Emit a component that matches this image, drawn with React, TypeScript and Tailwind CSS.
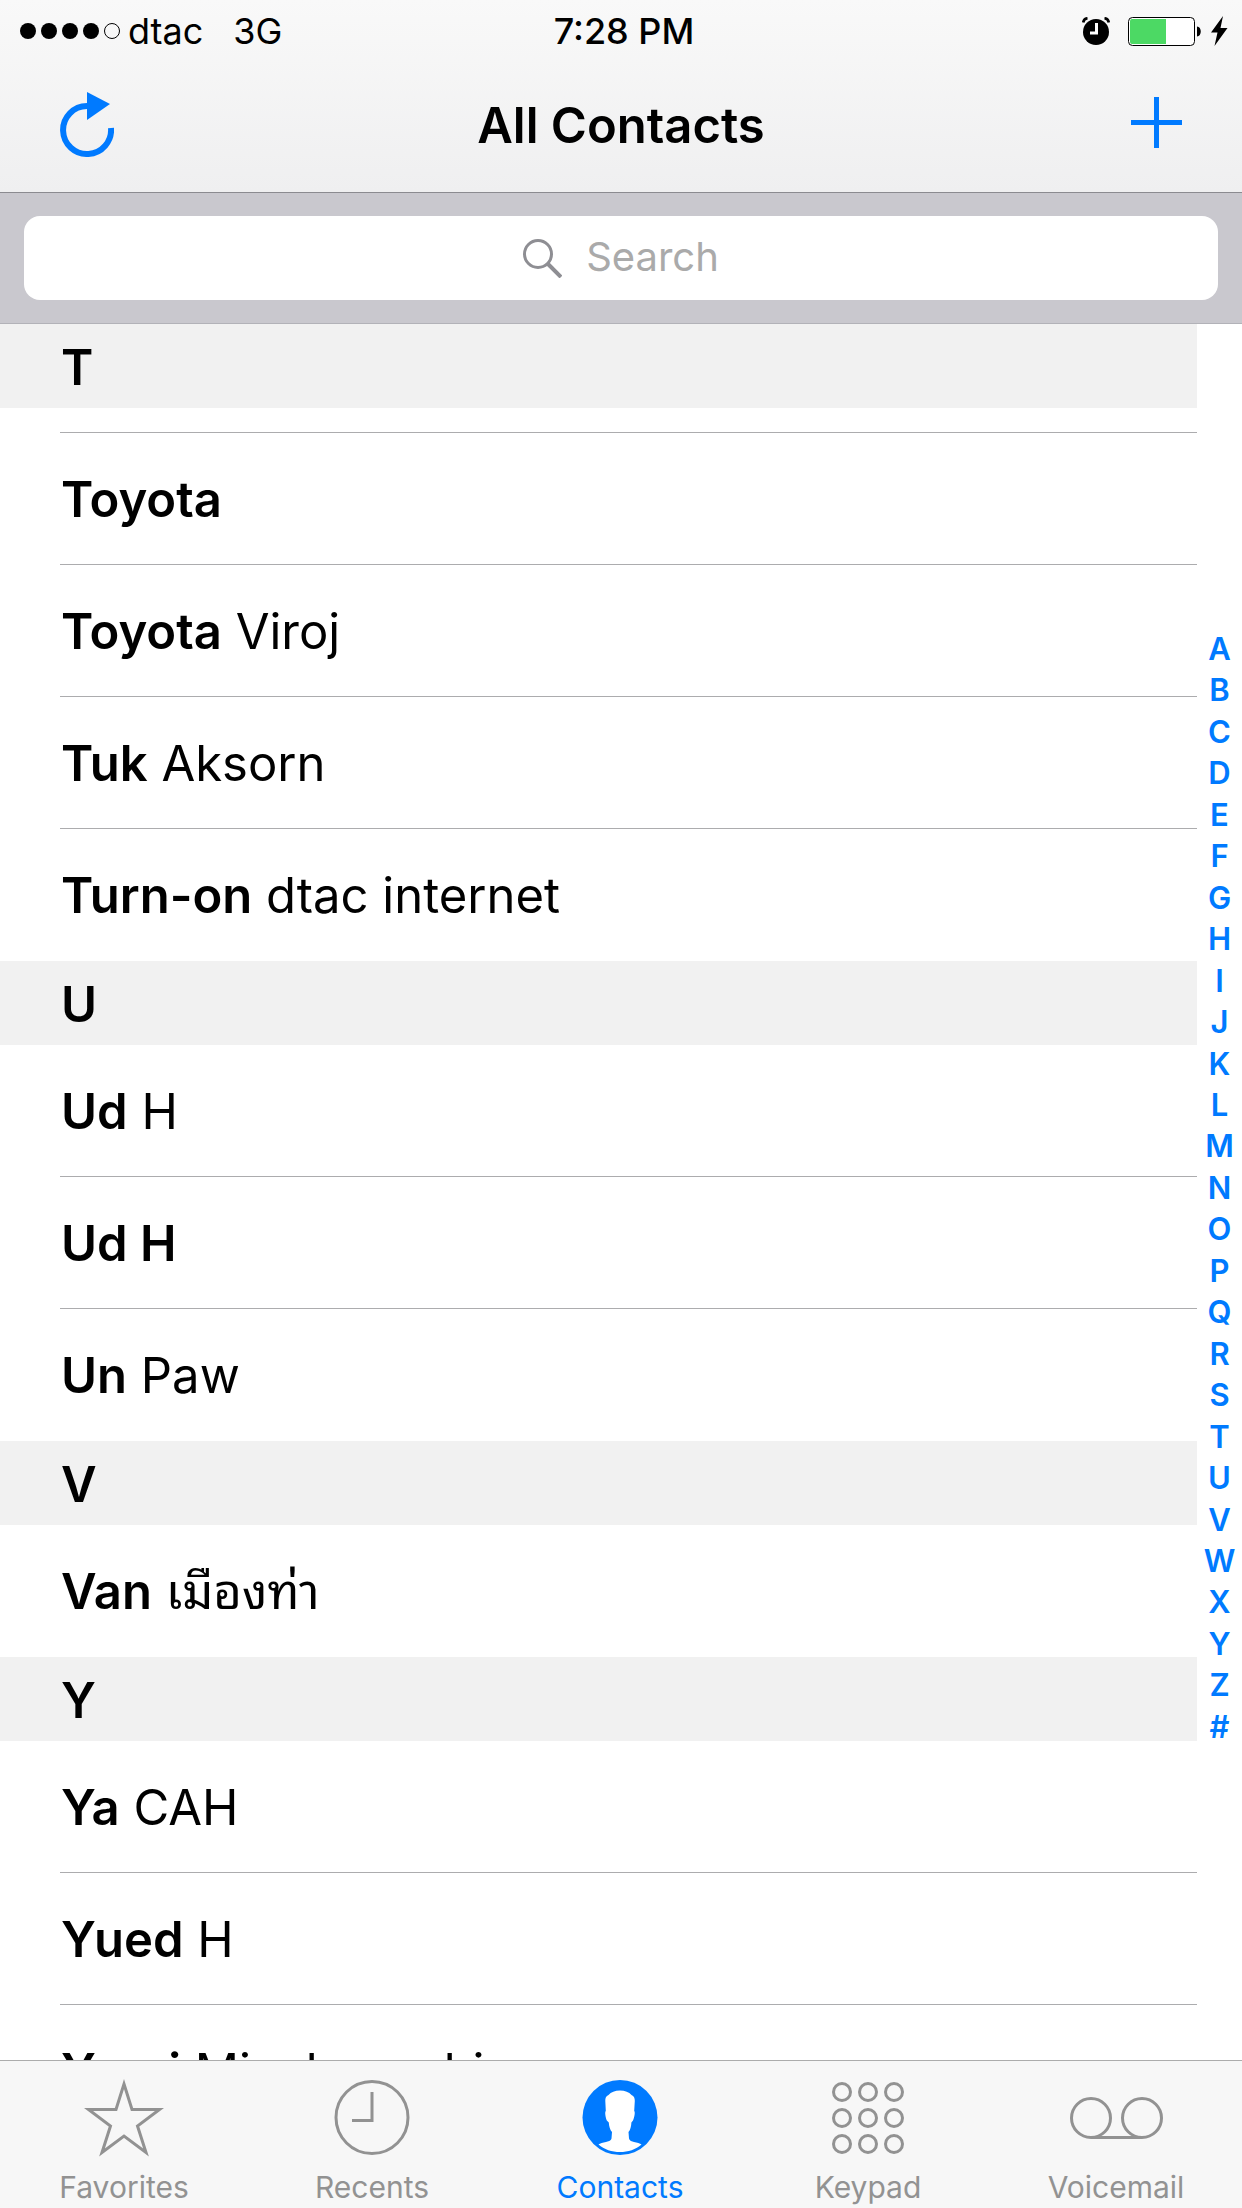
import React from 'react';

type Contact = { first: string; last?: string };
type Section = { letter: string; contacts: Contact[]; scrolled?: boolean };

const sections: Section[] = [
  {
    letter: 'T',
    scrolled: true,
    contacts: [
      { first: 'Toyota' },
      { first: 'Toyota', last: 'Viroj' },
      { first: 'Tuk', last: 'Aksorn' },
      { first: 'Turn-on', last: 'dtac internet' },
    ],
  },
  {
    letter: 'U',
    contacts: [{ first: 'Ud', last: 'H' }, { first: 'Ud H' }, { first: 'Un', last: 'Paw' }],
  },
  { letter: 'V', contacts: [{ first: 'Van', last: 'เมืองท่า' }] },
  {
    letter: 'Y',
    contacts: [
      { first: 'Ya', last: 'CAH' },
      { first: 'Yued', last: 'H' },
      { first: 'Yumi', last: 'Miyabayashi' },
    ],
  },
];

const indexLetters = 'ABCDEFGHIJKLMNOPQRSTUVWXYZ#'.split('');

const StatusBar = () => (
  <div className="grid h-[60px] grid-cols-[1fr_auto_1fr] items-center pt-[2px] pr-[14px] pl-5 text-[36px] leading-[44px]">
    <div className="flex items-center">
      <svg width="100" height="16" viewBox="0 0 100 16" aria-hidden="true">
        <circle cx="8" cy="8" r="8" />
        <circle cx="29" cy="8" r="8" />
        <circle cx="50" cy="8" r="8" />
        <circle cx="71" cy="8" r="8" />
        <circle cx="92" cy="8" r="7.5" fill="none" stroke="#000" />
      </svg>
      <span className="ml-2">dtac</span>
      <span className="ml-[30px]">3G</span>
    </div>
    <span className="font-medium">7:28 PM</span>
    <div className="flex items-center justify-end">
      <svg width="28" height="28" viewBox="0 0 28 28" aria-hidden="true">
        <circle cx="14" cy="15" r="13" />
        <path d="M1.2 5.5A5 5 0 0 1 5.5 1.2M22.5 1.2A5 5 0 0 1 26.8 5.5" fill="none" stroke="#000" strokeWidth="2.6" />
        <path d="M14.5 6v10H8" fill="none" stroke="#fff" strokeWidth="3" />
      </svg>
      <svg className="ml-[18px]" width="74" height="29" viewBox="0 0 74 29" aria-hidden="true">
        <rect x="0.5" y="0.5" width="66" height="28" rx="4" fill="#fff" stroke="#000" />
        <path d="M4 2h34v25H4a2 2 0 0 1-2-2V4a2 2 0 0 1 2-2z" fill="#4cd964" />
        <path d="M69 9.5c5 0 5 10 0 10z" />
      </svg>
      <svg className="ml-[9px]" width="17" height="30" viewBox="0 0 17 30" aria-hidden="true">
        <path d="M12 0L0 16.5h6.5L3.5 30L16.5 12H9.5z" />
      </svg>
    </div>
  </div>
);

const NavBar = () => (
  <div className="grid h-[132px] grid-cols-[1fr_auto_1fr] items-center px-[60px]">
    <button type="button" aria-label="Refresh" className="justify-self-start pb-1">
      <svg width="54" height="65" viewBox="0 0 54 65" aria-hidden="true">
        <path d="M28 14h-1a24 24 0 1 0 24 22" fill="none" stroke="#007aff" strokeWidth="6" />
        <path d="M27 0l23 12-23 16z" fill="#007aff" />
      </svg>
    </button>
    <h1 className="text-[49px] leading-[60px] font-semibold">All Contacts</h1>
    <button type="button" aria-label="Add contact" className="justify-self-end pb-2">
      <svg width="51" height="51" viewBox="0 0 51 51" aria-hidden="true">
        <path d="M25.5 0v51M0 25.5h51" stroke="#007aff" strokeWidth="5" />
      </svg>
    </button>
  </div>
);

const SearchBar = () => (
  <div className="shrink-0 border-b border-[#b2b2b8] bg-[#c9c8ce] px-6 py-[23px]">
    <label className="flex h-[84px] items-center justify-center gap-6 rounded-2xl bg-white">
      <svg width="39" height="39" viewBox="0 0 39 39" aria-hidden="true">
        <circle cx="15" cy="15" r="13.5" fill="none" stroke="#8e8e93" strokeWidth="3" />
        <path d="M25 25l13 13" stroke="#8e8e93" strokeWidth="4" />
      </svg>
      <input
        type="search"
        aria-label="Search"
        placeholder="Search"
        className="field-sizing-content pb-[2px] text-[40px] leading-[50px] outline-none placeholder:text-[#aaaaaa]"
      />
    </label>
  </div>
);

const ContactSection = ({ section }: { section: Section }) => (
  <section id={section.letter}>
    <h2 className="h-[84px] bg-[#f1f1f1] pt-1 pl-[61px] text-[49px] leading-[80px] font-semibold">
      {section.letter}
    </h2>
    <ul className="pl-[60px]">
      {section.scrolled && <li className="h-[25px] border-b border-[#acacae]" />}
      {section.contacts.map((c, i) => (
        <li key={i} className="h-[132px] border-b border-[#acacae] last:border-b-0">
          <a href={`#${section.letter}`} className="block pt-[2px] pl-px text-[49px] leading-[130px] whitespace-nowrap">
            <span className="font-semibold">{c.first}</span>
            {c.last && <span> {c.last}</span>}
          </a>
        </li>
      ))}
    </ul>
  </section>
);

const StarIcon = () => (
  <svg width="82" height="78" viewBox="0 0 82 78" fill="none" stroke="currentColor" strokeWidth="3" aria-hidden="true">
    <path d="M41 5L49 30.5H76.5L54.5 47L63 73.500L41 57L19 73.5L27.5 47L5.500 30.5H33z" />
  </svg>
);

const ClockIcon = () => (
  <svg width="76" height="78" viewBox="0 0 76 78" fill="none" stroke="currentColor" strokeWidth="3" aria-hidden="true">
    <circle cx="38" cy="38.5" r="36" />
    <path d="M38 13v28.5H18" />
  </svg>
);

const PersonIcon = () => (
  <svg width="76" height="78" viewBox="0 0 76 78" aria-hidden="true">
    <circle cx="38" cy="38.5" r="37.5" fill="currentColor" />
    <path
      d="M38 11.500C33 11.500 29 13 26.500 16C24 17 23.200 19 23.300 22L23.800 32C22.600 33 23.500 38 24.800 41.500L26.800 43.500C27 47 28 51 30 53L29.500 59.500C29 62 26 62.500 24 63C21 63.500 18 64.500 16.500 65.500C22 70.500 30 73 38 73C46 73 54 70.500 59.500 65.500C58 64.500 55 63.500 52 63C50 62.500 47.500 62 47 59.500L46.500 53C48.500 51 49.200 47 49.400 43.500L51 41.500C52.500 38 53.400 33 52.200 32L52.800 22C52.800 19 52 17 49.500 16C47 13 43 11.500 38 11.500z"
      fill="#fff"
    />
  </svg>
);

const KeypadIcon = () => (
  <svg width="72" height="78" viewBox="0 0 72 78" fill="none" stroke="currentColor" strokeWidth="3" aria-hidden="true">
    {[13, 39, 65].map((y) => [10, 36, 62].map((x) => <circle key={`${x}-${y}`} cx={x} cy={y} r="8.5" />))}
  </svg>
);

const VoicemailIcon = () => (
  <svg width="93" height="78" viewBox="0 0 93 78" fill="none" stroke="currentColor" strokeWidth="3" aria-hidden="true">
    <circle cx="21" cy="39" r="19.5" />
    <circle cx="72" cy="39" r="19.5" />
    <path d="M21 58.5h51" />
  </svg>
);

const tabs = [
  { label: 'Favorites', Icon: StarIcon },
  { label: 'Recents', Icon: ClockIcon },
  { label: 'Contacts', Icon: PersonIcon, active: true },
  { label: 'Keypad', Icon: KeypadIcon },
  { label: 'Voicemail', Icon: VoicemailIcon },
];

const TabBar = () => (
  <nav className="grid shrink-0 grid-cols-5 border-t border-[#acacac] bg-[#f7f7f7] pt-[18px] pr-[2px] pb-[3px]">
    {tabs.map(({ label, Icon, active }) => (
      <button
        key={label}
        type="button"
        className={`flex flex-col items-center gap-3 text-[30px] leading-[36px] ${active ? 'text-[#007aff]' : 'text-[#929292]'}`}
      >
        <Icon />
        <span>{label}</span>
      </button>
    ))}
  </nav>
);

export default function App() {
  return (
    <div className="flex h-screen flex-col overflow-hidden bg-white font-['Inter','Noto_Sans_Thai_Looped','Noto_Sans_Thai','Noto_Sans',sans-serif] text-black">
      <header className="shrink-0 border-b border-[#8b8b90] bg-gradient-to-b from-[#f9f9f9] to-[#efeff0]">
        <StatusBar />
        <NavBar />
      </header>
      <SearchBar />
      <main className="flex min-h-0 flex-1">
        <div className="min-w-0 flex-1 overflow-hidden">
          {sections.map((s) => (
            <ContactSection key={s.letter} section={s} />
          ))}
        </div>
        <nav
          aria-label="Index"
          className="flex w-[45px] flex-col items-center justify-between pt-[304px] pb-[313px] text-[31px] leading-[41px] font-semibold text-[#007aff]"
        >
          {indexLetters.map((l) => (
            <a key={l} href={`#${l}`}>
              {l}
            </a>
          ))}
        </nav>
      </main>
      <TabBar />
    </div>
  );
}
